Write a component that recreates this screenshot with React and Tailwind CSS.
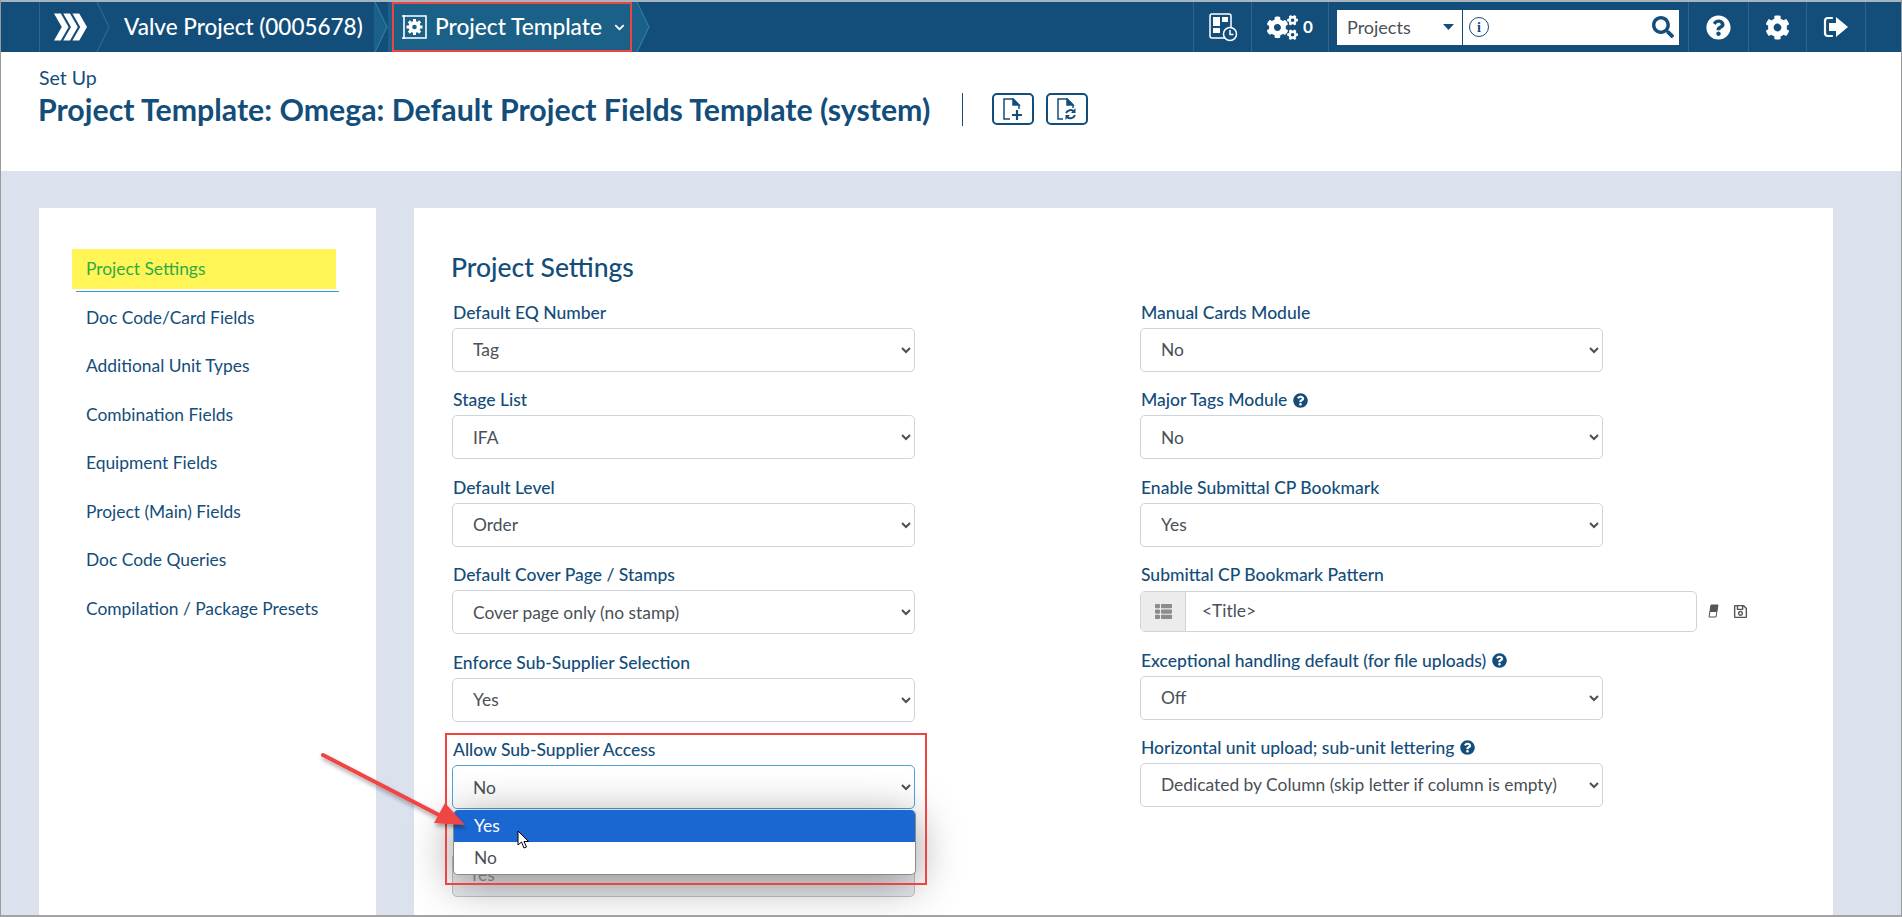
import React from "react";
import { FaCog, FaCogs, FaQuestionCircle, FaSearch, FaThList, FaRegSave, FaChevronDown } from "react-icons/fa";

const Sep = ({ color = "#2a6a96", fill }) => (
  <svg width="14" height="50" viewBox="0 0 14 50" className="shrink-0">
    {fill && <path d="M0 0H1L13 25L1 50H0Z" fill={fill} />}
    <path d="M1 0L13 25L1 50" fill="none" stroke={color} strokeWidth="1.2" />
  </svg>
);

const Field = ({ label, value, options, help, className = "", focus }) => (
  <div className={className}>
    <div className="h-[24px] pl-[1px] flex items-center gap-[6px] text-[17.500px] font-medium leading-[24px] text-[#134d7a]">
      {label}
      {help && <FaQuestionCircle className="text-[15px]" />}
    </div>
    <select
      defaultValue={value}
      className={`mt-[3px] block w-[463px] h-[44px] rounded-[5px] border bg-white pl-[16px] pr-[4px] text-[17.400px] text-[#495057] ${focus ? "border-[#4fa3d9]" : "border-[#ced4da]"}`}
    >
      {(options || [value]).map((o) => (
        <option key={o}>{o}</option>
      ))}
    </select>
  </div>
);

const NavCell = ({ children, className = "" }) => (
  <div className={`h-full flex items-center justify-center border-l border-[#2f6389] ${className}`}>{children}</div>
);

export default function App() {
  const items = [
    "Doc Code/Card Fields",
    "Additional Unit Types",
    "Combination Fields",
    "Equipment Fields",
    "Project (Main) Fields",
    "Doc Code Queries",
    "Compilation / Package Presets",
  ];
  return (
    <div className="relative w-[1902px] h-[917px] overflow-hidden bg-[#dbe1ed] border-l border-r border-[#9a9a9a] border-b-2 border-b-[#a3a3a3] font-['Lato',sans-serif]">
      {/* Top bar */}
      <div className="h-[52px] border-t-2 border-[#a9b4bd] bg-[#134d7a] flex items-center text-white">
        <div className="w-[38px] h-full" />
        <div className="h-full w-[57px] border-l border-[#2f6389] flex items-center justify-end pr-[9px]">
          <svg width="33" height="28" viewBox="0 0 34 28" fill="white">
            <path d="M0 0H7L15 14L7 28H0L8 14Z" />
            <path d="M9.500 0H16.500L24.500 14L16.500 28H9.500L17.500 14Z" />
            <path d="M19 0H26L34 14L26 28H19L27 14Z" />
          </svg>
        </div>
        <Sep />
        <div className="pl-[14px] text-[22.500px] font-medium leading-none whitespace-nowrap w-[264px]">Valve Project (0005678)</div>
        <Sep fill="#1b6187" color="#2f7aa5" />
        <div className="h-full bg-[#1b6187] flex items-center pl-[13px] w-[248px]">
          <svg width="27" height="28" viewBox="0 0 27 28" className="shrink-0">
            <path d="M3 2V26M1 3H25V25H1" fill="none" stroke="white" strokeWidth="1.6" />
            <g transform="translate(13.5 14)">
              <circle r="4.500" fill="none" stroke="white" strokeWidth="3" />
              <path d="M-1.500-8H1.500V8H-1.500ZM-8-1.500H8V1.500H-8Z" fill="white" />
              <path d="M-1.500-8H1.500V8H-1.500ZM-8-1.500H8V1.500H-8Z" fill="white" transform="rotate(45)" />
              <circle r="2.300" fill="#1b6187" />
            </g>
          </svg>
          <span className="ml-[7px] w-[179px] text-[22.700px] font-medium leading-none whitespace-nowrap">Project Template</span>
          <FaChevronDown className="text-[11px]" />
        </div>
        <Sep fill="#1b6187" color="#2f7aa5" />
        <div className="flex-1" />
        <div className="h-full flex items-center">
          <NavCell className="w-[58px]">
            <svg width="30" height="30" viewBox="0 0 30 30" fill="none" stroke="white" strokeWidth="1.5">
              <rect x="2" y="2" width="21" height="24" rx="2" />
              <path d="M5 5H12V14H5ZM14 5H20V10H14ZM5 16H12V21H5Z" fill="white" stroke="none" />
              <circle cx="22" cy="22" r="6.500" fill="#134d7a" />
              <path d="M22 18V22.500H25.500" />
            </svg>
          </NavCell>
          <NavCell className="w-[77px] gap-[5px]">
            <FaCogs className="text-[31px]" />
            <span className="text-[17px] font-bold">0</span>
          </NavCell>
          <NavCell className="w-[360px] justify-start pl-[8px]">
            <div className="w-[125px] h-[35px] bg-white text-[#495057] text-[18px] flex items-center pl-[10px] pr-[8px] justify-between">
              <span>Projects</span>
              <svg width="11" height="6" viewBox="0 0 11 6"><path d="M0 0H11L5.500 6Z" fill="#134d7a" /></svg>
            </div>
            <div className="ml-[1px] w-[216px] h-[35px] bg-white flex items-center justify-between pl-[6px] pr-[5px] text-[#134d7a]">
              <span className="w-[20px] h-[20px] rounded-full border border-[#134d7a] flex items-center justify-center text-[14px] font-bold font-['Liberation_Serif',serif]">i</span>
              <FaSearch className="text-[22px]" />
            </div>
          </NavCell>
          <NavCell className="w-[60px]"><FaQuestionCircle className="text-[25px]" /></NavCell>
          <NavCell className="w-[58px]"><FaCog className="text-[25px]" /></NavCell>
          <NavCell className="w-[59px]">
            <svg width="26" height="24" viewBox="0 0 26 24" fill="white">
              <path d="M9 3H5Q2 3 2 6V18Q2 21 5 21H9" fill="none" stroke="white" strokeWidth="2.200" strokeLinecap="round" />
              <path d="M6 8H13V2L25 12L13 22V16H6Z" />
            </svg>
          </NavCell>
          <NavCell className="w-[36px]" />
        </div>
      </div>

      {/* Title band */}
      <div className="h-[119px] bg-white pl-[38px] pt-[14px] text-[#134d7a]">
        <div className="text-[19.500px] leading-[24px]">Set Up</div>
        <div className="mt-[1px] flex items-center">
          <h1 className="-ml-px text-[30.300px] leading-[36px] font-bold whitespace-nowrap w-[924px]">Project Template: Omega: Default Project Fields Template (system)</h1>
          <div className="w-px h-[33px] bg-[#134d7a]" />
          <div className="ml-[29px] w-[42px] h-[32px] rounded-[5px] border-2 border-[#134d7a] flex items-center justify-center">
            <svg width="22" height="22" viewBox="0 0 22 22" fill="none" stroke="#134d7a" strokeWidth="1.500">
              <path d="M8 21H2V1H11L17 7V11" />
              <path d="M11 1V7H17Z" fill="#134d7a" />
              <path d="M15 12V22M10 17H20" strokeWidth="2.200" />
            </svg>
          </div>
          <div className="ml-[12px] w-[42px] h-[32px] rounded-[5px] border-2 border-[#134d7a] flex items-center justify-center">
            <svg width="22" height="22" viewBox="0 0 22 22" fill="none" stroke="#134d7a" strokeWidth="1.500">
              <path d="M7 21H2V1H11L17 7V10" />
              <path d="M11 1V7H17Z" fill="#134d7a" />
              <path d="M10 15A5 5 0 0 1 18 13.500M19 17A5 5 0 0 1 11 19" strokeWidth="2" />
              <path d="M19.500 10V15H15ZM9.500 22V17H14Z" fill="#134d7a" stroke="none" />
            </svg>
          </div>
        </div>
      </div>

      {/* Body */}
      <div className="flex pt-[37px] pl-[38px] gap-[38px]">
        {/* Sidebar */}
        <aside className="w-[337px] h-[760px] bg-white pt-[41px] text-[17.400px] text-[#134d7a]">
          <div className="ml-[33px] w-[264px] h-[40px] bg-[#fff556] text-[#2cab4a] flex items-center pl-[14px]">Project Settings</div>
          <div className="ml-[37px] mt-[2px] w-[263px] h-px bg-[#3f9fd3]" />
          <ul className="mt-[1.500px]">
            {items.map((t) => (
              <li key={t} className="h-[48.500px] pl-[47px] flex items-center">{t}</li>
            ))}
          </ul>
        </aside>

        {/* Main panel */}
        <main className="w-[1419px] h-[760px] bg-white pl-[37px] pt-[42px]">
          <h2 className="text-[26.500px] leading-[34px] text-[#134d7a] font-medium">Project Settings</h2>
          <div className="mt-[16.500px] flex">
            <div className="w-[689px] pl-[1px]">
              <Field label="Default EQ Number" value="Tag" />
              <Field label="Stage List" value="IFA" className="mt-[16.500px]" />
              <Field label="Default Level" value="Order" className="mt-[16.500px]" />
              <Field label="Default Cover Page / Stamps" value="Cover page only (no stamp)" className="mt-[16.500px]" />
              <Field label="Enforce Sub-Supplier Selection" value="Yes" className="mt-[16.500px]" />
              <Field label="Allow Sub-Supplier Access" value="No" focus options={["Yes", "No"]} className="mt-[16.500px]" />
              <div className="mt-[44px] w-[463px] h-[44px] rounded-[5px] border border-[#c4c4c4] bg-[#e9ecef] pl-[16px] flex items-center text-[17.400px] text-[#9a9a9a]">Yes</div>
            </div>
            <div>
              <Field label="Manual Cards Module" value="No" />
              <Field label="Major Tags Module" value="No" help className="mt-[16.500px]" />
              <Field label="Enable Submittal CP Bookmark" value="Yes" className="mt-[16.500px]" />
              <div className="mt-[16px]">
                <div className="h-[24px] pl-[1px] text-[17.500px] font-medium leading-[24px] text-[#134d7a]">Submittal CP Bookmark Pattern</div>
                <div className="mt-[4px] flex items-center">
                  <div className="w-[557px] h-[41px] flex rounded-[5px] border border-[#ced4da] overflow-hidden">
                    <div className="w-[45px] bg-[#ececec] border-r border-[#ced4da] flex items-center justify-center text-[#8c8c8c]">
                      <FaThList className="text-[17px]" />
                    </div>
                    <div className="flex-1 pl-[16px] flex items-center text-[17.400px] text-[#495057]">&lt;Title&gt;</div>
                  </div>
                  <svg width="11" height="14" viewBox="0 0 11 14" className="ml-[11px]">
                    <path d="M3 1H10L8 13H1Z" fill="none" stroke="#555" />
                    <path d="M3 1H10L8.800 8H1.800Z" fill="#555" />
                  </svg>
                  <FaRegSave className="ml-[14px] text-[15px] text-[#555]" />
                </div>
              </div>
              <Field label="Exceptional handling default (for file uploads)" value="Off" help className="mt-[17px]" />
              <Field label="Horizontal unit upload; sub-unit lettering" value="Dedicated by Column (skip letter if column is empty)" help className="mt-[16px]" />
            </div>
          </div>
        </main>
      </div>

      {/* Open dropdown list */}
      <div className="absolute left-[452px] top-[810px] w-[463px] h-[65px] bg-white rounded-[5px] overflow-hidden shadow-[0_8px_45px_rgba(0,0,0,0.42)] border-b border-x border-[#8a8a8a] text-[17.400px]">
        <div className="h-[32px] bg-[#1a67d2] text-white flex items-center pl-[20px]">Yes</div>
        <div className="h-[32px] text-[#495057] flex items-center pl-[20px]">No</div>
      </div>

      {/* Annotations */}
      <div className="absolute left-[391px] top-[2px] w-[240px] h-[50px] border-2 border-[#ef4444]" />
      <div className="absolute left-[444px] top-[733px] w-[482px] h-[152px] border-2 border-[#ef4444]" />
      <svg className="absolute left-[310px] top-[745px]" width="170" height="100" viewBox="0 0 170 100">
        <defs>
          <filter id="as" x="-20%" y="-20%" width="140%" height="150%">
            <feDropShadow dx="1" dy="3" stdDeviation="2" floodColor="#000" floodOpacity="0.35" />
          </filter>
        </defs>
        <g filter="url(#as)">
          <path d="M12 10L128 70" stroke="#ef4444" strokeWidth="4" strokeLinecap="round" />
          <path d="M154 80L123 78L134 58Z" fill="#ef4444" />
        </g>
      </svg>
      <svg className="absolute left-[516px] top-[830px]" width="14" height="20" viewBox="0 0 14 20">
        <path d="M1 1V15L4.500 12L7 18L9.500 17L7 11.500H11.500Z" fill="white" stroke="black" strokeWidth="1" />
      </svg>
    </div>
  );
}
